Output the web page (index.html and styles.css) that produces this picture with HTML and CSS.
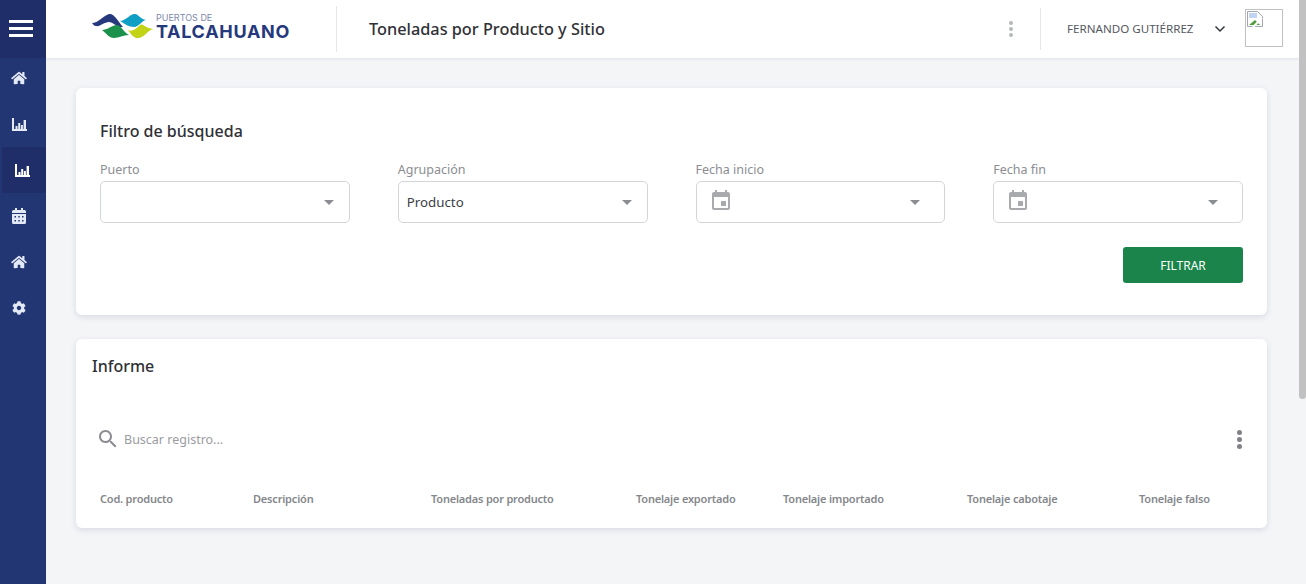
FILE: index.html
```html
<!DOCTYPE html>
<html lang="es">
<head>
    <meta charset="UTF-8">
    <meta name="viewport" content="width=device-width, initial-scale=1.0">
    <title>Toneladas por Producto y Sitio</title>
    <link rel="stylesheet" href="styles.css">
</head>
<body>
    <aside class="sidebar">
        <div class="burger"><span></span><span></span><span></span></div>
        <nav class="side-nav">
            <a class="side-item">
                <svg class="ico ico-home" viewBox="0 0 576 512"><path d="M280.37 148.26L96 300.11V464a16 16 0 0 0 16 16l112.06-.29a16 16 0 0 0 15.92-16V368a16 16 0 0 1 16-16h64a16 16 0 0 1 16 16v95.64a16 16 0 0 0 16 16.05L464 480a16 16 0 0 0 16-16V300L295.67 148.26a12.19 12.19 0 0 0-15.3 0zM571.6 251.47L488 182.56V44.05a12 12 0 0 0-12-12h-56a12 12 0 0 0-12 12v72.61L318.47 43a48 48 0 0 0-61 0L4.34 251.47a12 12 0 0 0-1.6 16.9l25.5 31A12 12 0 0 0 45.15 301l235.22-193.74a12.19 12.19 0 0 1 15.3 0L530.9 301a12 12 0 0 0 16.9-1.6l25.5-31a12 12 0 0 0-1.7-16.93z"/></svg>
            </a>
            <a class="side-item">
                <svg class="ico ico-chart" viewBox="0 0 15 13"><path d="M0 0h2v11h13v2H0z"/><path d="M3.500 8h2v3h-2zM6.200 5h2v6h-2zM8.900 7h2v4h-2zM11.600 2h2.400v9h-2.400z"/></svg>
            </a>
            <a class="side-item active">
                <svg class="ico ico-chart" viewBox="0 0 15 13"><path d="M0 0h2v11h13v2H0z"/><path d="M3.500 8h2v3h-2zM6.200 5h2v6h-2zM8.900 7h2v4h-2zM11.600 2h2.400v9h-2.400z"/></svg>
            </a>
            <a class="side-item">
                <svg class="ico ico-cal" viewBox="0 0 14 16"><path fill-rule="evenodd" d="M3 0h2v2h4V0h2v2h1.500A1.500 1.500 0 0 1 14 3.500V5H0V3.500A1.500 1.500 0 0 1 1.500 2H3zM0 6h14v8.500a1.500 1.500 0 0 1-1.500 1.500h-11A1.500 1.500 0 0 1 0 14.500zM2.500 8v1.500H4V8zm3.750 0v1.500h1.500V8zM10 8v1.500h1.500V8zm-7.500 4v1.500H4V12zm3.750 0v1.500h1.500V12zM10 12v1.500h1.500V12z"/></svg>
            </a>
            <a class="side-item">
                <svg class="ico ico-home" viewBox="0 0 576 512"><path d="M280.37 148.26L96 300.11V464a16 16 0 0 0 16 16l112.06-.29a16 16 0 0 0 15.92-16V368a16 16 0 0 1 16-16h64a16 16 0 0 1 16 16v95.64a16 16 0 0 0 16 16.05L464 480a16 16 0 0 0 16-16V300L295.67 148.26a12.19 12.19 0 0 0-15.3 0zM571.6 251.47L488 182.56V44.05a12 12 0 0 0-12-12h-56a12 12 0 0 0-12 12v72.61L318.47 43a48 48 0 0 0-61 0L4.34 251.47a12 12 0 0 0-1.6 16.9l25.5 31A12 12 0 0 0 45.15 301l235.22-193.74a12.19 12.19 0 0 1 15.3 0L530.9 301a12 12 0 0 0 16.9-1.6l25.5-31a12 12 0 0 0-1.7-16.93z"/></svg>
            </a>
            <a class="side-item">
                <svg class="ico ico-cog" viewBox="0 0 512 512"><path d="M487.4 315.7l-42.6-24.6c4.3-23.2 4.3-47 0-70.2l42.6-24.6c4.9-2.8 7.1-8.6 5.500-14-11.1-35.6-30-67.8-54.7-94.6-3.800-4.100-10-5.100-14.8-2.300L380.8 110c-17.9-15.4-38.5-27.3-60.8-35.1V25.800c0-5.600-3.900-10.500-9.400-11.700-36.7-8.200-74.3-7.800-109.2 0-5.500 1.200-9.400 6.100-9.400 11.700V75c-22.2 7.900-42.8 19.800-60.8 35.100L88.700 85.500c-4.900-2.800-11-1.900-14.800 2.300-24.700 26.700-43.600 58.900-54.700 94.600-1.700 5.400.6 11.200 5.500 14L67.300 221c-4.300 23.200-4.300 47 0 70.200l-42.600 24.600c-4.900 2.800-7.100 8.600-5.500 14 11.100 35.600 30 67.800 54.700 94.600 3.800 4.100 10 5.100 14.800 2.300l42.600-24.600c17.900 15.400 38.500 27.300 60.800 35.100v49.200c0 5.600 3.900 10.500 9.400 11.700 36.700 8.200 74.300 7.800 109.200 0 5.500-1.200 9.400-6.100 9.400-11.700v-49.200c22.200-7.900 42.800-19.800 60.8-35.100l42.600 24.600c4.900 2.800 11 1.900 14.800-2.300 24.700-26.700 43.600-58.900 54.700-94.600 1.500-5.500-.7-11.300-5.600-14.100zM256 336c-44.100 0-80-35.900-80-80s35.900-80 80-80 80 35.900 80 80-35.900 80-80 80z"/></svg>
            </a>
        </nav>
    </aside>

    <div class="main">
        <header class="topbar">
            <div class="logo">
                <svg class="logo-mark" viewBox="0 0 62 26">
                    <path fill="#25397c" d="M0 10C6 10 11 3 17 1 22 0 26 8 31 14 25 15 21 9 17 9 12 9 8 14 4 13 2 13 1 11 0 10z"/>
                    <path fill="#0f9fc4" d="M28 8C33 8 37 2 42 1 46 0 48 6 54 7 49 8 47 14 42 14 37 14 33 11 28 8z"/>
                    <path fill="#1b914c" d="M10 17C15 17 19 13 24 12 29 11 31 19 37 22 31 22 27 25 22 25 17 25 14 20 10 17z"/>
                    <path fill="#c3d318" d="M36 17C40 19 44 16 48 12 51 10 53 15 61 16 56 17 53 24 47 25 42 26 39 21 36 17z"/>
                </svg>
                <div class="logo-text">
                    <span class="logo-small">PUERTOS DE</span>
                    <span class="logo-big">TALCAHUANO</span>
                </div>
            </div>
            <h1 class="page-title">Toneladas por Producto y Sitio</h1>
            <div class="top-right">
                <div class="top-dots"><i></i><i></i><i></i></div>
                <div class="user">
                    <span class="user-name">FERNANDO GUTIÉRREZ</span>
                    <svg class="chevron" viewBox="0 0 12 8"><path d="M1.500 1.500L6 6l4.500-4.500" fill="none" stroke="#33363d" stroke-width="1.500"/></svg>
                    <div class="avatar">
                        <svg class="broken" viewBox="0 0 16 16">
                            <path fill="#fff" stroke="#a3a8b0" d="M.5.500h10l5 5v10H.5z"/>
                            <path fill="#c3d4f2" d="M2 2h8v5H2z"/>
                            <path fill="#4f9d3a" d="M2 14l6-5 5 5z"/>
                            <path stroke="#fff" stroke-width="2" d="M6 16l9-9"/>
                        </svg>
                    </div>
                </div>
            </div>
        </header>

        <div class="content">
            <section class="card filter-card">
                <h2 class="card-title">Filtro de búsqueda</h2>
                <div class="filter-grid">
                    <div class="field">
                        <label>Puerto</label>
                        <div class="select"><span class="arrow"></span></div>
                    </div>
                    <div class="field">
                        <label>Agrupación</label>
                        <div class="select"><span class="value">Producto</span><span class="arrow"></span></div>
                    </div>
                    <div class="field">
                        <label>Fecha inicio</label>
                        <div class="select select-date">
                            <svg class="event" viewBox="0 0 24 24"><path d="M17 12h-5v5h5v-5zM16 1v2H8V1H6v2H5c-1.110 0-1.990.9-1.990 2L3 19c0 1.100.89 2 2 2h14c1.100 0 2-.9 2-2V5c0-1.100-.9-2-2-2h-1V1h-2zm3 18H5V8h14v11z"/></svg>
                            <span class="arrow"></span>
                        </div>
                    </div>
                    <div class="field">
                        <label>Fecha fin</label>
                        <div class="select select-date">
                            <svg class="event" viewBox="0 0 24 24"><path d="M17 12h-5v5h5v-5zM16 1v2H8V1H6v2H5c-1.110 0-1.990.9-1.990 2L3 19c0 1.100.89 2 2 2h14c1.100 0 2-.9 2-2V5c0-1.100-.9-2-2-2h-1V1h-2zm3 18H5V8h14v11z"/></svg>
                            <span class="arrow"></span>
                        </div>
                    </div>
                </div>
                <div class="filter-actions">
                    <button class="btn-filter">FILTRAR</button>
                </div>
            </section>

            <section class="card report-card">
                <h2 class="card-title">Informe</h2>
                <div class="search-row">
                    <svg class="search-icon" viewBox="0 0 24 24"><path d="M15.500 14h-.79l-.28-.27C15.410 12.590 16 11.110 16 9.500 16 5.910 13.090 3 9.500 3S3 5.910 3 9.500 5.910 16 9.500 16c1.610 0 3.090-.59 4.230-1.570l.27.28v.79l5 4.990L20.490 19l-4.990-5zm-6 0C7.010 14 5 11.990 5 9.500S7.010 5 9.500 5 14 7.010 14 9.500 11.990 14 9.500 14z"/></svg>
                    <span class="search-text">Buscar registro...</span>
                    <div class="row-dots"><i></i><i></i><i></i></div>
                </div>
                <div class="table-head">
                    <span>Cod. producto</span>
                    <span>Descripción</span>
                    <span>Toneladas por producto</span>
                    <span>Tonelaje exportado</span>
                    <span>Tonelaje importado</span>
                    <span>Tonelaje cabotaje</span>
                    <span>Tonelaje falso</span>
                </div>
            </section>
        </div>
    </div>

    <div class="scrollbar"><div class="scroll-thumb"></div></div>
</body>
</html>
```

FILE: styles.css
```css
body {
    margin: 0;
    height: 100vh;
    overflow: hidden;
    display: flex;
    font-family: "Noto Sans", "Open Sans", sans-serif;
    background-color: #f4f5f7;
    color: #2f3136;
}
.sidebar {
    flex: 0 0 46px;
    background-color: #223674;
}
.burger {
    height: 58px;
    box-sizing: border-box;
    padding: 20px 4px 0 0;
    background-color: #1f2e68;
    display: flex;
    flex-direction: column;
    align-items: center;
    gap: 4px;
}
.burger span {
    width: 24px;
    height: 3px;
    background-color: #fff;
}
.side-nav {
    margin-top: -3px;
    position: relative;
}
.side-item {
    height: 46px;
    margin-left: 2px;
    padding-right: 10px;
    display: flex;
    align-items: center;
    justify-content: center;
}
.side-item.active {
    background-color: #1f2e68;
    padding-right: 4px;
}
.ico {
    fill: #e4e9f6;
}
.active .ico {
    fill: #fff;
}
.ico-home {
    width: 16px;
    height: 14px;
}
.ico-chart {
    width: 15px;
    height: 13px;
}
.ico-cal {
    width: 14px;
    height: 16px;
}
.ico-cog {
    width: 14px;
    height: 14px;
}
.main {
    flex: 1;
    min-width: 0;
}
.topbar {
    height: 58px;
    background-color: #fff;
    box-shadow: 0 1px 3px rgba(40, 50, 90, 0.1);
    display: flex;
    align-items: center;
}
.logo {
    width: 291px;
    height: 46px;
    box-sizing: border-box;
    padding-left: 46px;
    display: flex;
    align-items: center;
    gap: 2px;
    border-right: 1px solid #e6e7ea;
}
.logo-mark {
    width: 62px;
    height: 26px;
    margin-top: -6px;
}
.logo-text {
    display: flex;
    flex-direction: column;
    margin-top: -4px;
    font-family: "Inter", sans-serif;
    color: #25397c;
}
.logo-small {
    font-size: 9px;
    line-height: 10px;
    color: #7d88ad;
}
.logo-big {
    font-size: 18px;
    line-height: 18px;
    font-weight: 700;
    letter-spacing: 0.7px;
}
.page-title {
    margin: 0 0 0 32px;
    font-size: 16.300px;
    font-weight: 500;
    color: #2f3136;
}
.top-right {
    margin-left: auto;
    display: flex;
    align-items: center;
}
.top-dots {
    display: flex;
    flex-direction: column;
    gap: 2px;
    margin-right: 27px;
}
.top-dots i {
    width: 4px;
    height: 4px;
    border-radius: 50%;
    background-color: #b5b7bb;
}
.user {
    height: 42px;
    display: flex;
    align-items: center;
    border-left: 1px solid #e6e7ea;
    padding-left: 26px;
    padding-right: 16px;
}
.user-name {
    width: 126px;
    white-space: nowrap;
    font-size: 11.600px;
    margin-top: -2px;
    color: #55585f;
}
.chevron {
    width: 12px;
    height: 8px;
    margin-left: 21px;
}
.avatar {
    width: 38px;
    height: 38px;
    box-sizing: border-box;
    border: 1px solid #c0c0c0;
    margin-left: 19px;
    margin-top: -2px;
    padding: 1px;
}
.broken {
    display: block;
    width: 16px;
    height: 16px;
}
.content {
    padding: 30px 32px 0 30px;
}
.card {
    background-color: #fff;
    border-radius: 6px;
    box-shadow: 0 2px 6px rgba(50, 60, 110, 0.14);
}
.filter-card {
    height: 227px;
    box-sizing: border-box;
    padding: 32px 24px 0;
    margin-bottom: 24px;
}
.card-title {
    margin: 0;
    font-size: 16px;
    line-height: 22px;
    font-weight: 500;
    color: #2f3136;
}
.filter-grid {
    display: grid;
    grid-template-columns: repeat(4, 1fr);
    column-gap: 48px;
    margin-top: 20px;
}
.field label {
    display: block;
    font-size: 12.500px;
    line-height: 16px;
    margin-bottom: 3px;
    color: #8b8d92;
}
.select {
    height: 42px;
    box-sizing: border-box;
    border: 1px solid #d4d5d8;
    border-radius: 5px;
    display: flex;
    align-items: center;
    padding: 0 15px 0 8px;
}
.select-date {
    padding-right: 24px;
}
.value {
    font-size: 13.300px;
    color: #3c3e44;
}
.arrow {
    margin-left: auto;
    border-left: 5px solid transparent;
    border-right: 5px solid transparent;
    border-top: 5px solid #8b8d92;
}
.event {
    width: 24px;
    height: 24px;
    margin: -3px 0 0 4px;
    fill: #a8aaae;
}
.filter-actions {
    display: flex;
    justify-content: flex-end;
    margin-top: 24px;
}
.btn-filter {
    width: 120px;
    height: 36px;
    border: 0;
    border-radius: 3px;
    background-color: #1a844a;
    color: #fff;
    font-family: inherit;
    font-size: 12px;
}
.report-card {
    height: 189px;
    box-sizing: border-box;
    padding: 16px 16px 0;
}
.search-row {
    display: flex;
    align-items: center;
    margin-top: 47px;
    padding-left: 4px;
    height: 30px;
}
.search-icon {
    width: 24px;
    height: 24px;
    fill: #8b8d92;
}
.search-text {
    margin-left: 4px;
    font-size: 12.500px;
    color: #9a9ca1;
}
.row-dots {
    margin-left: auto;
    margin-right: 9px;
    display: flex;
    flex-direction: column;
    gap: 2px;
}
.row-dots i {
    width: 5px;
    height: 5px;
    border-radius: 50%;
    background-color: #808287;
}
.table-head {
    display: grid;
    grid-template-columns: 153px 178px 205px 147px 184px 172px 1fr;
    margin-top: 37px;
    padding-left: 8px;
    font-size: 11px;
    letter-spacing: -0.2px;
    font-weight: 600;
    color: #85878c;
}
.scrollbar {
    flex: 0 0 7px;
}
.scroll-thumb {
    height: 399px;
    background-color: #c1c1c1;
    border-radius: 0 0 4px 4px;
}
```
